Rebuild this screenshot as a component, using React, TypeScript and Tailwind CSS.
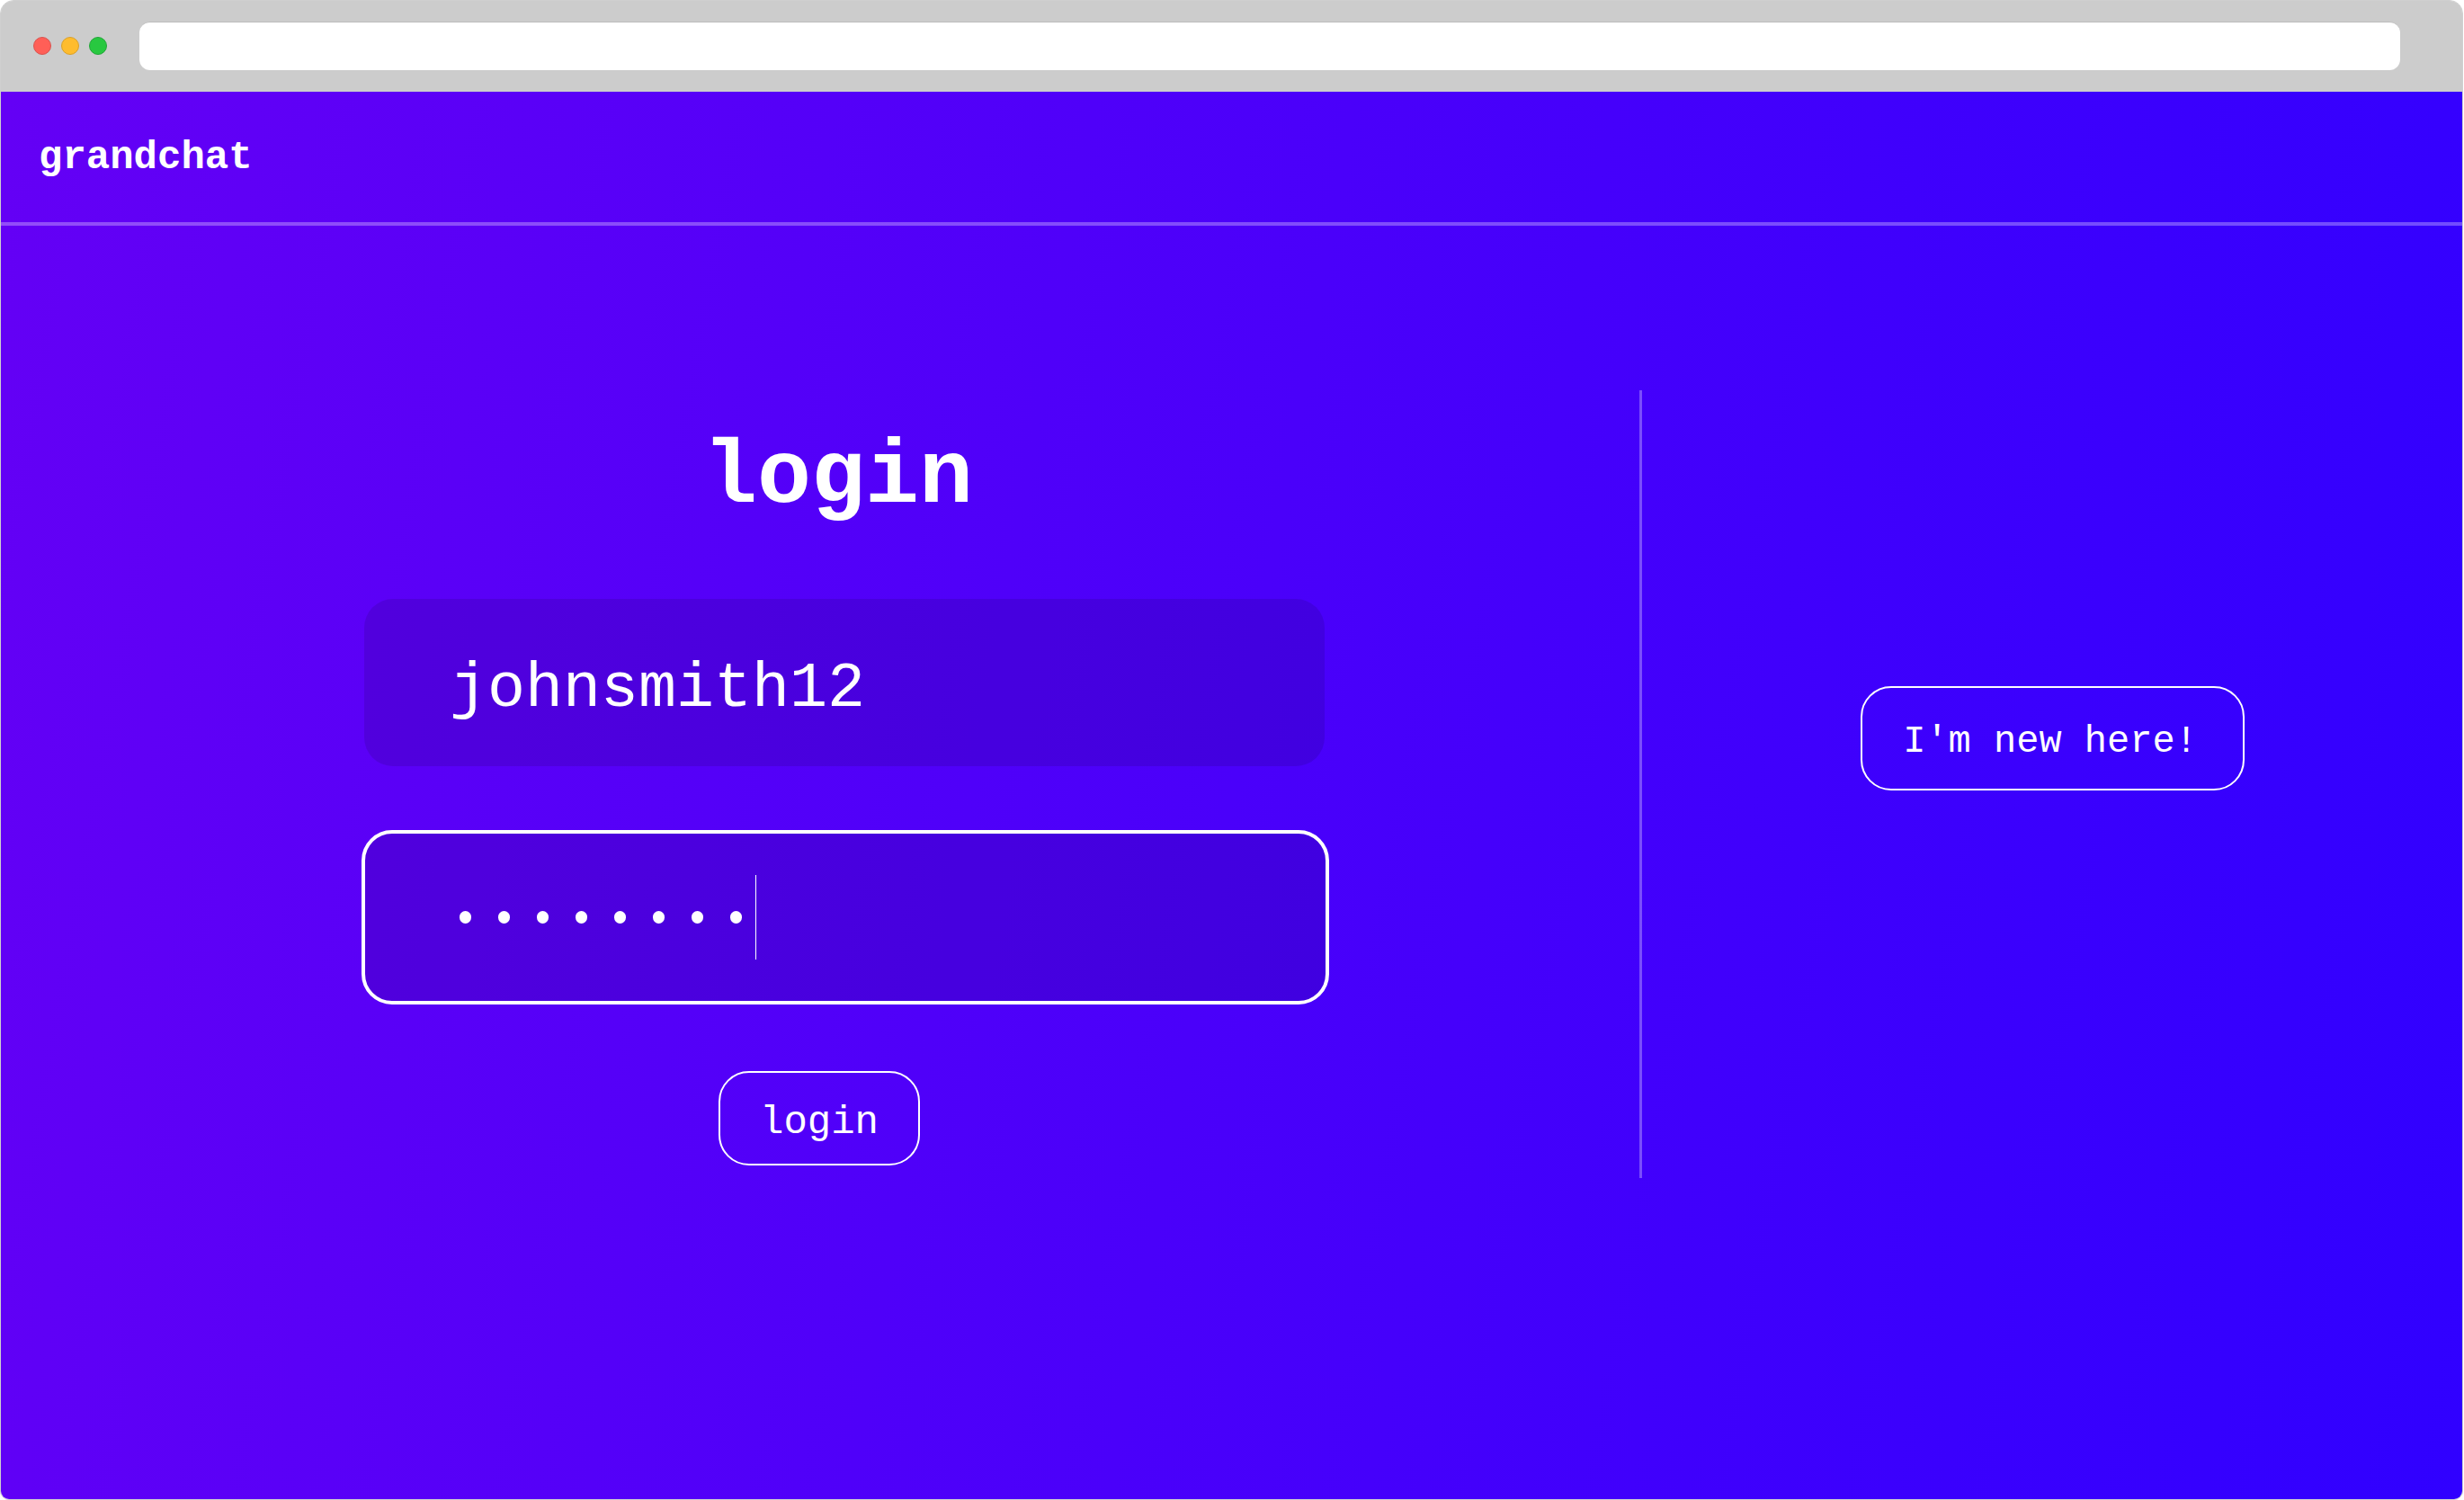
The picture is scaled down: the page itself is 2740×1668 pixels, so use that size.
import React from "react";

const mono = "font-['Liberation_Mono','DejaVu_Sans_Mono',monospace]";

export default function App() {
  return (
    <div className="w-[2740px] h-[1668px] bg-white">
      <div className="w-[2739px] h-[1668px] rounded-t-[15px] rounded-b-[10px] border border-[#cfcfcf] overflow-hidden flex flex-col">
        {/* browser chrome */}
        <div className="h-[101px] shrink-0 bg-[#cccccc] flex items-start">
          <div className="flex gap-[11px] ml-[36px] mt-[40px]">
            <div className="w-[20px] h-[20px] rounded-full bg-[#ff5f57] border border-[#d9534f]" />
            <div className="w-[20px] h-[20px] rounded-full bg-[#febc2e] border border-[#d9a02a]" />
            <div className="w-[20px] h-[20px] rounded-full bg-[#28c840] border border-[#22a538]" />
          </div>
          <div className="flex-1 ml-[36px] mr-[69px] mt-[23px] h-[54px] rounded-[12px] bg-white border-t border-[#bdbdbd]" />
        </div>

        {/* app */}
        <div className={`flex-1 flex flex-col bg-[linear-gradient(100deg,#6400f5,#3000ff)] text-white ${mono}`}>
          <div className="h-[149px] shrink-0 border-b-[4px] border-white/30 pl-[42px] pt-[51px]">
            <span className="text-[44px] leading-[44px] font-bold">grandchat</span>
          </div>

          <div className="flex-1 flex pt-[183px]">
            {/* left column */}
            <div className="w-[1822px] shrink-0 pt-[48px] flex flex-col items-start">
              <div className="ml-[404px] w-[1068px] text-center pr-[14px] text-[100px] leading-[100px] font-bold">
                login
              </div>
              <div className="ml-[404px] mt-[84px] w-[1068px] h-[186px] rounded-[32px] bg-black/10 pl-[95px] pt-[66px] text-[70px] leading-[70px]">
                johnsmith12
              </div>
              <div className="ml-[401px] mt-[71px] w-[1076px] h-[194px] rounded-[34px] border-[4px] border-white bg-black/10 flex items-center pl-[90px]">
                <div className="flex items-center">
                  {[0, 1, 2, 3, 4, 5, 6, 7].map((i) => (
                    <div key={i} className="w-[43px] flex justify-center">
                      <div className="w-[13px] h-[14px] rounded-full bg-white" />
                    </div>
                  ))}
                  <div className="w-px h-[94px] bg-white" />
                </div>
              </div>
              <button className="ml-[798px] mt-[74px] w-[224px] h-[105px] rounded-[34px] border-2 border-white flex items-center justify-center pt-[8px] text-[44px] leading-[44px] text-white">
                login
              </button>
            </div>

            {/* divider */}
            <div className="w-[3px] h-[876px] shrink-0 bg-white/30" />

            {/* right column */}
            <div className="flex-1 flex justify-center items-start pt-[329px]">
              <button className="w-[427px] h-[116px] rounded-[34px] border-2 border-white flex items-center justify-center pt-[8px] pr-[4px] text-[42px] leading-[42px] text-white whitespace-pre">
                I'm new here!
              </button>
            </div>
          </div>
        </div>
      </div>
    </div>
  );
}
